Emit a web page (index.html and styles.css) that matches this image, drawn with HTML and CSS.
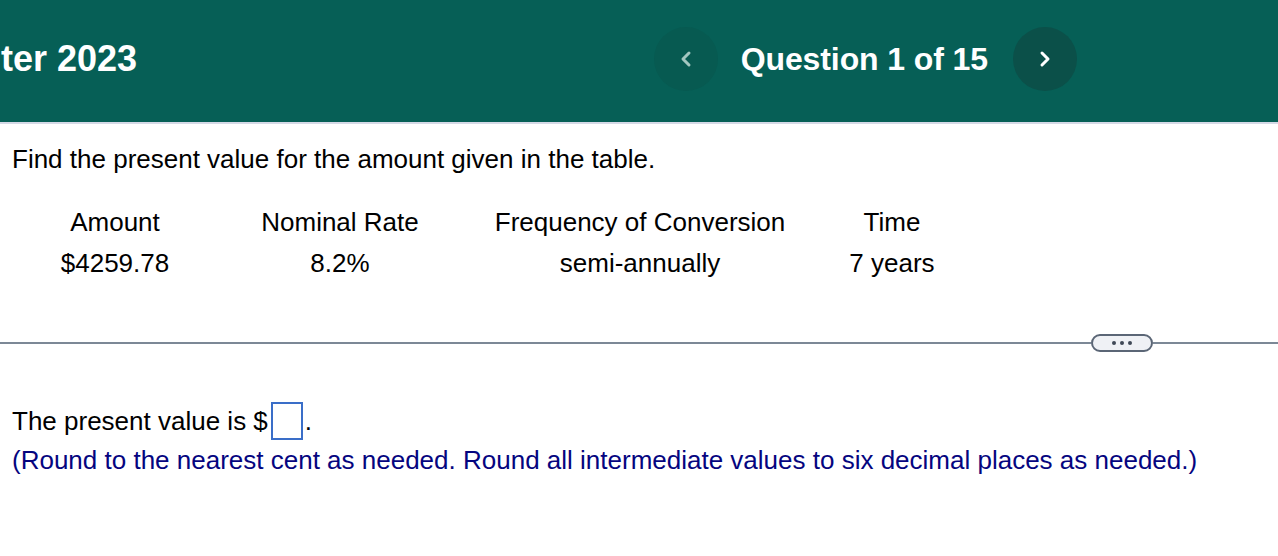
FILE: index.html
```html
<!DOCTYPE html>
<html>
<head>
<meta charset="utf-8">
<link rel="stylesheet" href="styles.css">
</head>
<body>
<header class="topbar">
  <div class="title">ter 2023</div>
  <nav class="qnav">
    <button class="navbtn prev" aria-label="Previous question">
      <svg width="14" height="18" viewBox="0 0 14 18"><path d="M10 3 L4 9 L10 15" fill="none" stroke="#a3c7c0" stroke-width="3" stroke-linecap="round" stroke-linejoin="round"/></svg>
    </button>
    <div class="qlabel">Question 1 of 15</div>
    <button class="navbtn next" aria-label="Next question">
      <svg width="14" height="18" viewBox="0 0 14 18"><path d="M4 3 L10 9 L4 15" fill="none" stroke="#ffffff" stroke-width="3" stroke-linecap="round" stroke-linejoin="round"/></svg>
    </button>
  </nav>
</header>
<main class="content">
  <p class="prompt">Find the present value for the amount given in the table.</p>
  <div class="datatable">
    <div class="cell">Amount</div>
    <div class="cell">Nominal Rate</div>
    <div class="cell">Frequency of Conversion</div>
    <div class="cell">Time</div>
    <div class="cell">$4259.78</div>
    <div class="cell">8.2%</div>
    <div class="cell">semi-annually</div>
    <div class="cell">7 years</div>
  </div>
  <div class="divider">
    <div class="rule grow"></div>
    <button class="more" aria-label="More"><span class="dot"></span><span class="dot"></span><span class="dot"></span></button>
    <div class="rule tail"></div>
  </div>
  <div class="answer">
    <span>The present value is $</span><span class="box"></span><span class="period">.</span>
  </div>
  <p class="note">(Round to the nearest cent as needed. Round all intermediate values to six decimal places as needed.)</p>
</main>
</body>
</html>
```
FILE: styles.css
```css
* { box-sizing: border-box; }
body {
  margin: 0;
  font-family: "Liberation Sans", Arial, sans-serif;
  color: #000;
  background: #fff;
  overflow: hidden;
}
.topbar {
  height: 124px;
  background: #065f56;
  border-bottom: 2px solid #d5d9e6;
  display: flex;
  align-items: center;
  padding-left: 1px;
  padding-bottom: 4px;
  padding-right: 201px;
}
.title {
  color: #fff;
  font-weight: bold;
  font-size: 36px;
}
.qnav {
  margin-left: auto;
  display: flex;
  align-items: center;
  gap: 23px;
}
.navbtn {
  width: 64px;
  height: 64px;
  border-radius: 50%;
  border: none;
  padding: 0;
  display: flex;
  align-items: center;
  justify-content: center;
}
.navbtn.prev { background: #075a51; }
.navbtn.next { background: #0b5049; }
.qlabel {
  color: #fff;
  font-weight: bold;
  font-size: 32px;
  letter-spacing: -0.1px;
  margin-right: 2px;
}
.content {
  padding-left: 12px;
}
.prompt {
  margin: 20px 0 0;
  font-size: 26px;
  line-height: 30px;
}
.datatable {
  margin-top: 28px;
  margin-left: -2px;
  display: grid;
  grid-template-columns: 210px 240px 360px 144px;
  grid-auto-rows: 41px;
  font-size: 26px;
}
.cell {
  display: flex;
  align-items: center;
  justify-content: center;
}
.divider {
  margin-top: 50px;
  margin-left: -12px;
  height: 18px;
  display: flex;
  align-items: center;
}
.rule {
  height: 2px;
  background: #7c8896;
}
.rule.grow { flex: 1; }
.rule.tail { width: 125px; }
.more {
  width: 62px;
  height: 18px;
  border: 2px solid #5b6676;
  border-radius: 9px;
  background: #eff1f5;
  padding: 0;
  display: flex;
  align-items: center;
  justify-content: center;
  gap: 4px;
}
.dot {
  width: 4px;
  height: 4px;
  border-radius: 50%;
  background: #3f4856;
}
.answer {
  margin-top: 50px;
  display: flex;
  align-items: center;
  font-size: 26px;
  height: 38px;
}
.box {
  width: 32px;
  height: 38px;
  border: 2px solid #3a6ec8;
  margin-left: 3px;
}
.period { margin-left: 2px; }
.note {
  margin: 5px 0 0;
  font-size: 26px;
  line-height: 30px;
  color: #05057f;
}
```
